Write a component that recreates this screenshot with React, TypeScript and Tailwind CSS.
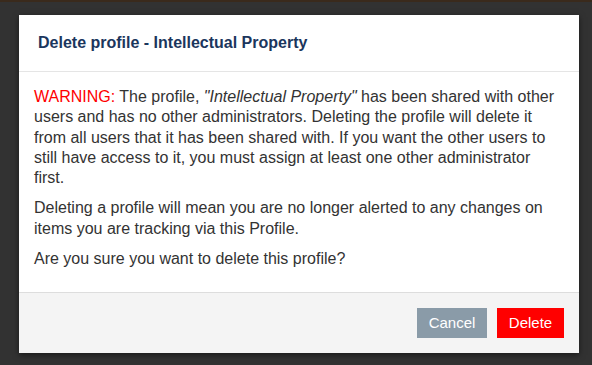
export default function App() {
  return (
    <div className="w-[592px] h-[365px] bg-[#323232] border-t-2 border-[#3a2a1c] font-['Liberation_Sans',Arial,sans-serif] overflow-hidden">
      <div className="ml-[19px] mt-[13px] w-[560px] bg-white shadow-[0_2px_6px_rgba(0,0,0,0.5)]">
        <div className="h-[57px] px-[19px] flex items-center border-b border-[#e5e5e5]">
          <h2 className="text-[16px] font-bold text-[#1b365d]">Delete profile - Intellectual Property</h2>
        </div>
        <div className="px-[15px] pt-[15px] pb-[23px] text-[16px] leading-[20.25px] text-[#333333]">
          <p className="mb-[10px]">
            <span className="text-[#ff0000]">WARNING:</span> The profile, <em>"Intellectual Property"</em> has been shared with other
            users and has no other administrators. Deleting the profile will delete it from all users that it has been
            shared with. If you want the other users to still have access to it, you must assign at least one other
            administrator first.
          </p>
          <p className="mb-[10px]">
            Deleting a profile will mean you are no longer alerted to any changes on items you are tracking via this Profile.
          </p>
          <p>Are you sure you want to delete this profile?</p>
        </div>
        <div className="bg-[#f4f4f4] border-t border-[#dddddd] p-[15px] flex justify-end gap-[10px]">
          <button className="h-[30px] w-[70px] bg-[#8a9ba8] text-white text-[15px]">Cancel</button>
          <button className="h-[30px] w-[67px] bg-[#ff0000] text-white text-[15px]">Delete</button>
        </div>
      </div>
    </div>
  )
}
